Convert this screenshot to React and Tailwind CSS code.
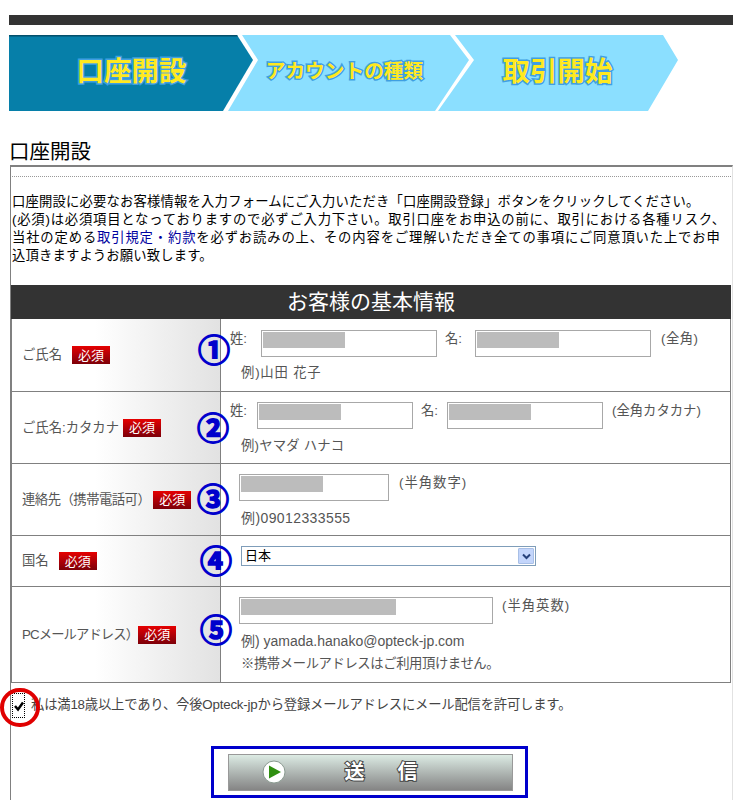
const Badge = () => (
	<span className="inline-flex w-[38px] h-[18px] shrink-0 items-center justify-center bg-gradient-to-b from-[#e60000] to-[#7d0008] text-white text-[13px] leading-none">
		必須
	</span>
);

// the white box with the grey redaction in it
const Field = ({ className, fill }) => (
	<div className={`h-[27px] border border-[#a8a8a8] bg-white p-px ${className}`}>
		<div className={`h-4 bg-[#bcbcbc] ${fill}`}></div>
	</div>
);

const Num = ({ children, className }) => (
	<span className={`absolute w-[34px] text-center text-[32px] leading-none font-bold text-[#0000cc] [-webkit-text-stroke:1.500px_#0000cc] ${className}`}>
		{children}
	</span>
);

const Row = ({ label, height, num, children }) => (
	<div className={`relative flex border-b border-[#808080] ${height}`}>
		<div className="w-[210px] shrink-0 flex items-center pl-[10px] border-l border-r border-[#808080] bg-gradient-to-r from-white from-40% to-[#e2e2e2] text-[#555] whitespace-nowrap">
			{label}
		</div>
		{num}
		<div className="flex-1 min-w-0 border-r border-[#808080] text-[#555]">{children}</div>
	</div>
);

const Steps = () => (
	<div className="relative ml-[9px] mt-[10px] w-[724px] h-[76px]">
		<svg className="absolute inset-0" width="724" height="76" viewBox="0 0 724 76">
			<path d="M0 0H228L244 25 214 76H0Z" fill="#067fa9" />
			<path d="M0 0H228L229 1.500H0Z" fill="#04506c" />
			<path d="M233 0H441L460 25 426 76H219L249 25Z" fill="#8bdfff" />
			<path d="M446 0H654L669 25 639 76H429L465 25Z" fill="#8bdfff" />
		</svg>
		<div className="relative flex h-[74px] items-center pl-[16px] font-bold text-[#ffe91f] [-webkit-text-stroke:3px_#3f9fe2] [paint-order:stroke_fill]">
			<div className="w-[213px] text-center text-[27.500px] leading-none">口座開設</div>
			<div className="w-[213px] text-center text-[19.700px] leading-none whitespace-nowrap">アカウントの種類</div>
			<div className="w-[213px] text-center text-[27.500px] leading-none">取引開始</div>
		</div>
	</div>
);

export default function App() {
	return (
		<div className="w-[739px] h-[800px] overflow-hidden bg-white pt-[15px] text-[13.330px] leading-[18px] text-black [font-family:'Liberation_Sans','Noto_Sans_CJK_JP',sans-serif]">
			<div className="ml-[9px] w-[724px] h-[10px] bg-[#333]"></div>
			<Steps />

			<h2 className="ml-[9px] mt-[28px] h-[26px] text-[20.500px] leading-[26px]">口座開設</h2>

			<div className="ml-[10px] w-[723px] h-[700px] border-l border-t-2 border-r border-l-[#808080] border-t-[#808080] border-r-[#e2e2e2]">
				<div className="mx-px mt-[9px] border-t border-dotted border-[#999]"></div>
				<div className="mt-[16px] pl-px whitespace-nowrap">
					<p className="tracking-[0.180px]">口座開設に必要なお客様情報を入力フォームにご入力いただき「口座開設登録」ボタンをクリックしてください。</p>
					<p className="tracking-[0.800px]">(必須)は必須項目となっておりますので必ずご入力下さい。取引口座をお申込の前に、取引における各種リスク、</p>
					<p className="tracking-[0.850px]">当社の定める<span className="text-[#0000a0]">取引規定・約款</span>を必ずお読みの上、その内容をご理解いただき全ての事項にご同意頂いた上でお申</p>
					<p className="tracking-[0.150px]">込頂きますようお願い致します。</p>
				</div>

				<div className="mt-[20px] w-[720px]">
					<div className="h-[34px] bg-[#333] text-white text-center text-[21px] leading-[33px]">お客様の基本情報</div>

					<Row
						height="h-[73px]"
						label={<><span className="mr-[10px]">ご氏名</span><Badge /></>}
						num={<Num className="left-[186px] top-[16px]">①</Num>}
					>
						<div className="flex pl-[9px] pt-[11px]">
							<span className="w-[31px]">姓:</span>
							<Field className="w-[176px]" fill="w-[82px]" />
							<span className="ml-2 w-[30px]">名:</span>
							<Field className="w-[176px]" fill="w-[82px]" />
							<span className="ml-[10px] tracking-[0.500px]">(全角)</span>
						</div>
						<p className="ml-5 mt-[7px] tracking-[0.800px]">例)山田 花子</p>
					</Row>

					<Row
						height="h-[72px]"
						label={<><span className="mr-1">ご氏名:カタカナ</span><Badge /></>}
						num={<Num className="left-[185px] top-[21px]">②</Num>}
					>
						<div className="flex pl-[9px] pt-[10px]">
							<span className="w-[27px]">姓:</span>
							<Field className="w-[156px]" fill="w-[82px]" />
							<span className="ml-2 w-[26px]">名:</span>
							<Field className="w-[156px]" fill="w-[82px]" />
							<span className="ml-[9px]">(全角カタカナ)</span>
						</div>
						<p className="ml-5 mt-[8px] tracking-[0.200px]">例)ヤマダ ハナコ</p>
					</Row>

					<Row
						height="h-[72px]"
						label={<><span className="mr-[3px] tracking-[-0.500px]">連絡先（携帯電話可）</span><Badge /></>}
						num={<Num className="left-[185px] top-[20px]">③</Num>}
					>
						<div className="flex pl-[18px] pt-[10px]">
							<Field className="w-[150px]" fill="w-[82px]" />
							<span className="ml-[10px] tracking-[1px]">(半角数字)</span>
						</div>
						<p className="ml-5 mt-[8px] text-[14px] tracking-[0.400px]">例)09012333555</p>
					</Row>

					<Row
						height="h-[51px]"
						label={<><span className="mr-[10px]">国名</span><Badge /></>}
						num={<Num className="left-[188px] top-[10px]">④</Num>}
					>
						<div className="ml-5 mt-[10px] w-[295px] h-5 flex items-center justify-between border border-[#7f9db9] pl-[3px] pr-px text-[13px] text-black">
							日本
							<span className="flex w-4 h-4 items-center justify-center bg-[#c3d5fb] border border-[#a8bfe6] rounded-[1px]">
								<svg width="9" height="7" viewBox="0 0 9 7">
									<path d="M1 1.500 4.500 5 8 1.500" fill="none" stroke="#25407a" strokeWidth="2" />
								</svg>
							</span>
						</div>
					</Row>

					<Row
						height="h-[96px]"
						label={<><span className="tracking-[-0.900px]">PCメールアドレス）</span><Badge /></>}
						num={<Num className="left-[188px] top-[28px]">⑤</Num>}
					>
						<div className="flex pl-[18px] pt-[10px]">
							<Field className="w-[254px]" fill="w-[155px]" />
							<span className="ml-[9px] tracking-[1px]">(半角英数)</span>
						</div>
						<p className="ml-5 mt-[8px] text-[14px]">例) yamada.hanako@opteck-jp.com</p>
						<p className="ml-5 mt-[5px] tracking-[-0.400px]">※携帯メールアドレスはご利用頂けません。</p>
					</Row>
				</div>

				<div className="relative mt-[14px] flex items-start pl-px">
					<span className="flex w-[13px] h-[25px] -mt-[4px] items-center justify-center border border-dotted border-black">
						<svg width="12" height="12" viewBox="0 0 12 12" className="shrink-0">
							<path d="M2 6 5 9.500 10 2.500" fill="none" stroke="#000" strokeWidth="2.500" />
						</svg>
					</span>
					<span className="ml-[6px] -mt-[1px] text-[#444] whitespace-nowrap tracking-[-0.200px]">私は満18歳以上であり、今後Opteck-jpから登録メールアドレスにメール配信を許可します。</span>
					<span className="absolute -left-[11px] -top-[9px] w-[40px] h-[39px] rounded-full border-[4px] border-[#e00000]"></span>
				</div>

				<div className="ml-[200px] mt-[28px] w-[317px] h-[52px] flex items-center border-[3px] border-[#0000cc]">
					<div className="relative ml-[14px] w-[285px] h-[37px] flex items-center justify-center border border-[#999] bg-gradient-to-b from-[#dcebe4] to-[#858585]">
						<svg className="absolute left-[33px] top-[5px]" width="24" height="24" viewBox="0 0 24 24">
							<circle cx="12" cy="12" r="11" fill="#fff" stroke="#8a9a90" />
							<path d="M7 5.500 19 12 7 18.500Z" fill="#2f8f10" />
						</svg>
						<span className="ml-[54px] text-[20px] leading-none font-bold text-white tracking-[33px] [-webkit-text-stroke:2px_#444] [paint-order:stroke_fill]">送信</span>
					</div>
				</div>
			</div>
		</div>
	);
}
